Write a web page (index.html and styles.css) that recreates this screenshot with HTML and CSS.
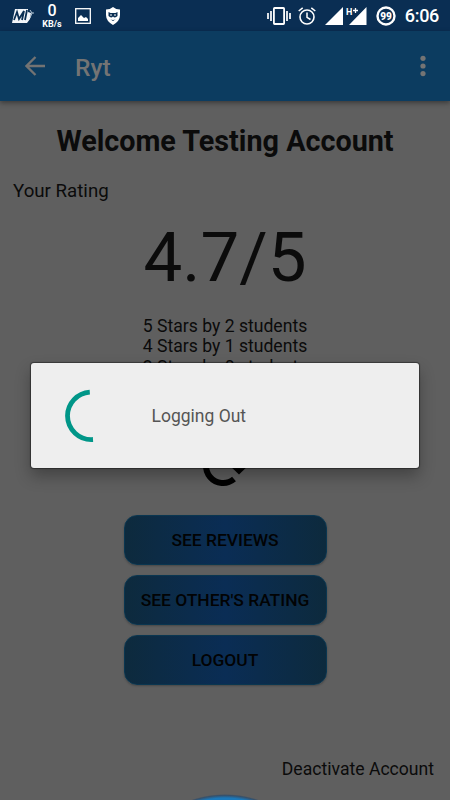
FILE: index.html
```html
<!DOCTYPE html>
<html lang="en">
<head>
<meta charset="utf-8">
<title>Ryt</title>
<link rel="stylesheet" href="styles.css">
</head>
<body>
<div class="screen">
  <header class="status">
    <svg class="mail" width="22" height="18" viewBox="0 0 22 18"><path d="M3 2H16V5L19 6 18 12 15 16H0Z" fill="#f3f6fa"/><path d="M2 13 5 5 7 12 12 4 10 13M13 13 15 3" fill="none" stroke="#0a2e53" stroke-width="1.800"/><path d="M18 3 20 6 18 11M20 6H22" fill="none" stroke="#b8cad9"/></svg>
    <div class="speed"><span class="speed-num">0</span><span class="speed-unit">KB/s</span></div>
    <svg class="photo" width="16" height="16" viewBox="0 0 16 16"><rect x=".7" y=".7" width="14.6" height="14.6" fill="none" stroke="#fff" stroke-width="1.3"/><path d="M3 13V10L6 7 9 10 11 9 13 11V13Z" fill="#fff"/></svg>
    <svg class="shield" width="16" height="18" viewBox="0 0 16 18"><path d="M8 0Q11 2.500 15 2.500V8Q15 14 8 18Q1 14 1 8V2.500Q5 2.500 8 0Z" fill="#fff"/><path d="M3.500 5 5.500 6H10.500L12.500 5V9Q10 11.500 8 9.500Q6 11.500 3.500 9ZM5 12Q8 14 11 12L8 14Z" fill="#0a2e53"/><path d="M5 8H7M9 8H11" stroke="#fff"/></svg>
    <span class="grow"></span>
    <svg class="vibrate" width="24" height="18" viewBox="0 0 24 18"><rect x="6.900" y="1" width="10.200" height="16" rx=".7" fill="none" stroke="#fff" stroke-width="1.800"/><path d="M4 4V14M1 6V12M20 4V14M23 6V12" stroke="#fff" stroke-width="1.700"/></svg>
    <svg class="alarm" width="18" height="18" viewBox="0 0 18 18"><circle cx="9" cy="10" r="7" fill="none" stroke="#fff" stroke-width="1.600"/><path d="M.7 4 4.700.8M17.300 4 13.300.8M9 5.500V10.300L12.500 12.500" fill="none" stroke="#fff" stroke-width="1.500"/></svg>
    <svg class="signal" width="42" height="20" viewBox="0 0 42 20"><path d="M0 19 18 1V19ZM24 19 41.500 1V19Z" fill="#fff"/><text class="hplus" x="21" y="9" stroke="#0a2e53" stroke-width="2" paint-order="stroke">H</text><path d="M27.500 4.500H33.500M30.500 1.500V7.500" stroke="#0a2e53" stroke-width="3"/><path d="M28 4.500H33M30.500 2V7" stroke="#fff" stroke-width="1.300"/></svg>
    <svg class="battery" width="20" height="20" viewBox="0 0 20 20"><circle cx="10" cy="10" r="8.500" fill="none" stroke="#fff" stroke-width="2.400"/><text class="charge" x="10" y="13.700" text-anchor="middle">99</text></svg>
    <span class="clock">6:06</span>
  </header>
  <nav class="bar">
    <svg class="back" width="20" height="20" viewBox="0 0 20 20"><path d="M10.500 1 1.500 10 10.500 19M1.500 10H20" fill="none" stroke="#737373" stroke-width="2.300"/></svg>
    <span class="title">Ryt</span>
    <span class="grow"></span>
    <svg class="more" width="6" height="22" viewBox="0 0 6 22"><g fill="#747474"><circle cx="3" cy="3.300" r="2.600"/><circle cx="3" cy="11" r="2.600"/><circle cx="3" cy="18.600" r="2.600"/></g></svg>
  </nav>
  <main class="page">
    <h1 class="welcome">Welcome Testing Account</h1>
    <div class="label">Your Rating</div>
    <div class="score">4.7/5</div>
    <div class="stars"><div>5 Stars by 2 students</div><div>4 Stars by 1 students</div><div>3 Stars by 0 students</div></div>
    <svg class="refresh" width="44" height="44" viewBox="0 0 44 44"><path d="M32 36A17 17 0 1 1 34 12" fill="none" stroke="#000" stroke-width="6"/><path d="M25 20H49L37 31.500Z"/></svg>
    <div class="actions"><button>SEE REVIEWS</button><button>SEE OTHER'S RATING</button><button>LOGOUT</button></div>
    <div class="deactivate">Deactivate Account</div>
  </main>
  <div class="glow"></div>
  <div class="dialog" role="dialog">
    <svg class="spinner" width="56" height="56" viewBox="0 0 56 56"><path d="M26.800 4.100A23.900 23.900 0 0 0 4.500 27.800A23.900 23.900 0 0 0 30 51.500" fill="none" stroke="#009688" stroke-width="4.800"/></svg>
    <span class="message">Logging Out</span>
  </div>
</div>
</body>
</html>
```
FILE: styles.css
```css
* { box-sizing: border-box; }
body { margin: 0; font-family: Roboto, sans-serif; }
.screen { position: relative; width: 450px; height: 800px; overflow: hidden; background: #5f5f5f; color: #0b0b0b; }
.grow { flex: 1; }
.status { display: flex; align-items: center; height: 31px; padding: 0 11px 0 12px; background: #0a2e53; color: #fff; }
.speed { display: flex; flex-direction: column; align-items: center; width: 22px; margin-left: 7px; }
.speed-num { font-size: 16px; line-height: 17px; font-weight: 500; }
.speed-unit { font: 700 9px/11px Roboto, sans-serif; }
.photo { margin-left: 12px; }
.shield { margin-left: 14px; }
.alarm { margin-left: 7px; }
.signal { margin-left: 9px; }
.battery { margin-left: 9px; }
.hplus { font-size: 9px; font-weight: 700; fill: #fff; }
.charge { font-size: 10px; font-weight: 900; fill: #fff; }
.clock { margin-left: 9px; font-size: 18px; line-height: 32px; font-weight: 500; letter-spacing: -.3px; }
.bar { position: relative; display: flex; align-items: center; height: 70px; padding: 0 24px 0 25px; background: #0c3c60; box-shadow: 0 2px 5px rgba(0,0,0,.4); }
.title { margin-left: 30px; padding-top: 3px; font-size: 24.500px; font-weight: 500; color: #747474; }
.page { display: flex; flex-direction: column; height: 699px; }
.welcome { margin: 23px 0 0; text-align: center; font-size: 28.750px; line-height: 34px; font-weight: 700; }
.label { margin: 22px 0 0 13px; font-size: 18.700px; line-height: 22px; }
.score { margin-top: 16px; text-align: center; font-size: 69px; line-height: 80px; }
.stars { height: 61px; margin-top: 18px; text-align: center; font-size: 17.600px; line-height: 20.300px; }
.refresh { margin: 66px 0 0 202px; }
.actions { display: flex; flex-direction: column; align-items: center; gap: 10px; margin-top: 28px; }
.actions button { width: 203px; height: 50px; padding: 0; border: 1px solid #0a3650; border-radius: 13px; background: linear-gradient(90deg, #0d2a3d, #0a2d55 50%, #0d2a3d); box-shadow: 0 1px 2px rgba(0,0,0,.25); font: 500 17.400px/48px Roboto, sans-serif; color: #020304; }
.deactivate { margin: 73px 16px 0 0; text-align: right; font-size: 17.600px; line-height: 22px; }
.glow { position: absolute; left: 155px; top: 794px; width: 140px; height: 90px; border-radius: 50%; background: radial-gradient(closest-side, #1a78ba 91%, #36506a 97%, transparent); }
.dialog { position: absolute; left: 31px; top: 363px; width: 388px; height: 105px; display: flex; align-items: center; border-radius: 3px; background: #eee; box-shadow: 0 0 1px 1px rgba(0,0,0,.4), 0 8px 16px rgba(0,0,0,.3); }
.spinner { margin-left: 32px; }
.message { margin-left: 32.500px; font-size: 17.500px; color: #555; }
```
